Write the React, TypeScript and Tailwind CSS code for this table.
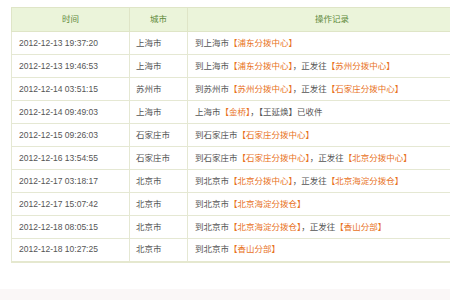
const rows: { time: string; city: string; parts: [string, boolean][] }[] = [
  { time: "2012-12-13 19:37:20", city: "上海市", parts: [["到上海市", false], ["【浦东分拨中心】", true]] },
  { time: "2012-12-13 19:46:53", city: "上海市", parts: [["到上海市", false], ["【浦东分拨中心】", true], ["，正发往", false], ["【苏州分拨中心】", true]] },
  { time: "2012-12-14 03:51:15", city: "苏州市", parts: [["到苏州市", false], ["【苏州分拨中心】", true], ["，正发往", false], ["【石家庄分拨中心】", true]] },
  { time: "2012-12-14 09:49:03", city: "上海市", parts: [["上海市", false], ["【金桥】", true], ["，【王延焕】已收件", false]] },
  { time: "2012-12-15 09:26:03", city: "石家庄市", parts: [["到石家庄市", false], ["【石家庄分拨中心】", true]] },
  { time: "2012-12-16 13:54:55", city: "石家庄市", parts: [["到石家庄市", false], ["【石家庄分拨中心】", true], ["，正发往", false], ["【北京分拨中心】", true]] },
  { time: "2012-12-17 03:18:17", city: "北京市", parts: [["到北京市", false], ["【北京分拨中心】", true], ["，正发往", false], ["【北京海淀分拨仓】", true]] },
  { time: "2012-12-17 15:07:42", city: "北京市", parts: [["到北京市", false], ["【北京海淀分拨仓】", true]] },
  { time: "2012-12-18 08:05:15", city: "北京市", parts: [["到北京市", false], ["【北京海淀分拨仓】", true], ["，正发往", false], ["【香山分部】", true]] },
  { time: "2012-12-18 10:27:25", city: "北京市", parts: [["到北京市", false], ["【香山分部】", true]] },
];

export default function App() {
  return (
    <div
      className="w-[450px] h-[300px] overflow-hidden bg-white flex flex-col"
      style={{ fontFamily: '"Liberation Sans", "Noto Sans CJK SC", sans-serif' }}
    >
      <div className="pt-[7px] pl-[11px] h-[289px]">
        <table className="w-[466px] border-collapse text-[8.5px] text-[#555] border-b-2 border-b-[#e5e8cf]">
          <thead>
            <tr className="bg-[#ebf4da] h-[24px] text-[#5f8a3c]">
              <th className="w-[118px] border border-[#dfe5c7] font-normal">时间</th>
              <th className="w-[58px] border border-[#dfe5c7] font-normal">城市</th>
              <th className="border border-[#dfe5c7] font-normal">操作记录</th>
            </tr>
          </thead>
          <tbody>
            {rows.map((r) => (
              <tr key={r.time} className="h-[23px]">
                <td className="border border-[#e5e8d3] pl-[7px] whitespace-nowrap">{r.time}</td>
                <td className="border border-[#e5e8d3] pl-[6px] whitespace-nowrap">{r.city}</td>
                <td className="border border-[#e5e8d3] pl-[7px] whitespace-nowrap">
                  {r.parts.map(([t, hl], i) => (
                    <span key={i} className={hl ? "text-[#e8711c]" : ""}>
                      {t}
                    </span>
                  ))}
                </td>
              </tr>
            ))}
          </tbody>
        </table>
      </div>
      <div className="flex-1 bg-[#faf7f7]" />
    </div>
  );
}
